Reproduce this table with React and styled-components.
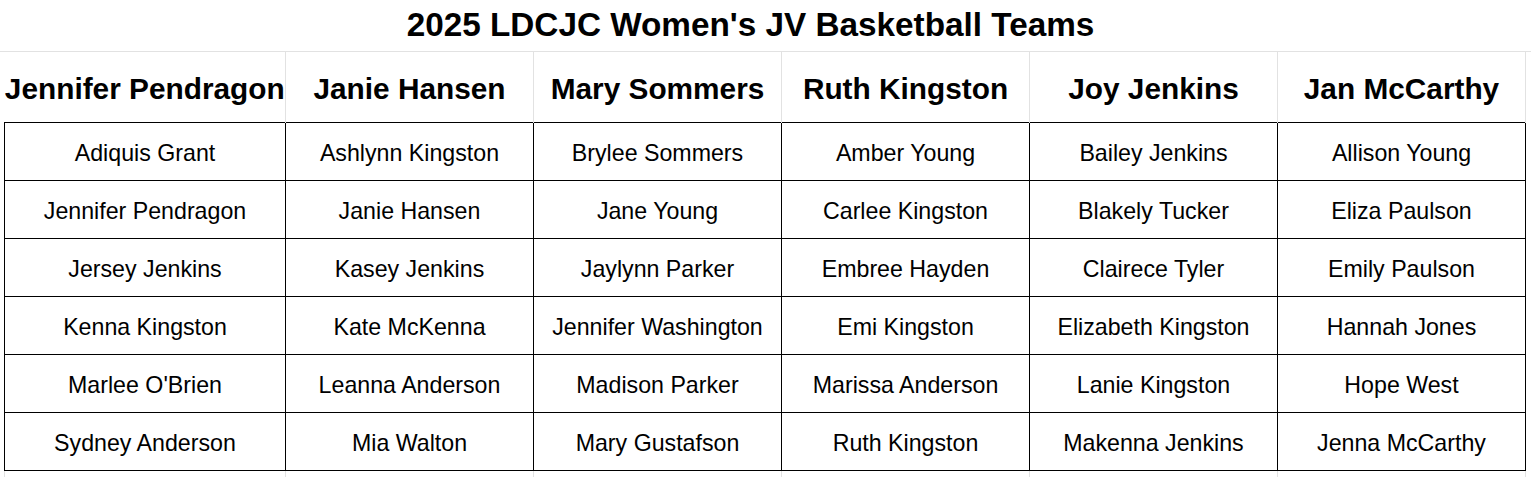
import React from "react";
import styled, { createGlobalStyle } from "styled-components";

const Global = createGlobalStyle`
  html, body { margin: 0; padding: 0; background: #fff; }
  body { font-family: "Liberation Sans", Arial, sans-serif; color: #000; }
`;

const Page = styled.div`
  width: 1531px;
  height: 477px;
  overflow: hidden;
`;

const Title = styled.h1`
  margin: 0;
  height: 52px;
  box-sizing: border-box;
  border-bottom: 1px solid #e2e2e2;
  display: flex;
  align-items: center;
  justify-content: center;
  padding: 0 30px 2px 0;
  width: 1531px;
  font-size: 33.3px;
  font-weight: bold;
  line-height: 1;
`;

const Table = styled.table`
  border-collapse: collapse;
  table-layout: fixed;
  margin-left: 4px;
  width: 1522px;
`;

const HeadCell = styled.th`
  height: 67px;
  padding: 3px 0 0;
  font-size: 29.8px;
  font-weight: bold;
  text-align: center;
  white-space: nowrap;
  border-right: 1px solid #e2e2e2;
  overflow: visible;
`;

const Cell = styled.td`
  height: 53px;
  padding: 4px 0 0;
  font-size: 23.2px;
  text-align: center;
  white-space: nowrap;
  border: 1px solid #000;
`;

const Filler = styled.td`
  height: 10px;
  padding: 0;
  border-left: 1px solid #e2e2e2;
  border-right: 1px solid #e2e2e2;
`;

const coaches = [
  "Jennifer Pendragon",
  "Janie Hansen",
  "Mary Sommers",
  "Ruth Kingston",
  "Joy Jenkins",
  "Jan McCarthy",
];

const rows = [
  ["Adiquis Grant", "Ashlynn Kingston", "Brylee Sommers", "Amber Young", "Bailey Jenkins", "Allison Young"],
  ["Jennifer Pendragon", "Janie Hansen", "Jane Young", "Carlee Kingston", "Blakely Tucker", "Eliza Paulson"],
  ["Jersey Jenkins", "Kasey Jenkins", "Jaylynn Parker", "Embree Hayden", "Clairece Tyler", "Emily Paulson"],
  ["Kenna Kingston", "Kate McKenna", "Jennifer Washington", "Emi Kingston", "Elizabeth Kingston", "Hannah Jones"],
  ["Marlee O'Brien", "Leanna Anderson", "Madison Parker", "Marissa Anderson", "Lanie Kingston", "Hope West"],
  ["Sydney Anderson", "Mia Walton", "Mary Gustafson", "Ruth Kingston", "Makenna Jenkins", "Jenna McCarthy"],
];

export default function App() {
  return (
    <Page>
      <Global />
      <Title>2025 LDCJC Women's JV Basketball Teams</Title>
      <Table>
        <colgroup>
          <col style={{ width: 281 }} />
          {[0, 1, 2, 3, 4].map((i) => (
            <col key={i} style={{ width: 248 }} />
          ))}
        </colgroup>
        <thead>
          <tr>
            {coaches.map((c) => (
              <HeadCell key={c}>{c}</HeadCell>
            ))}
          </tr>
        </thead>
        <tbody>
          {rows.map((r, i) => (
            <tr key={i}>
              {r.map((n, j) => (
                <Cell key={j}>{n}</Cell>
              ))}
            </tr>
          ))}
          <tr>
            {coaches.map((c) => (
              <Filler key={c} />
            ))}
          </tr>
        </tbody>
      </Table>
    </Page>
  );
}
